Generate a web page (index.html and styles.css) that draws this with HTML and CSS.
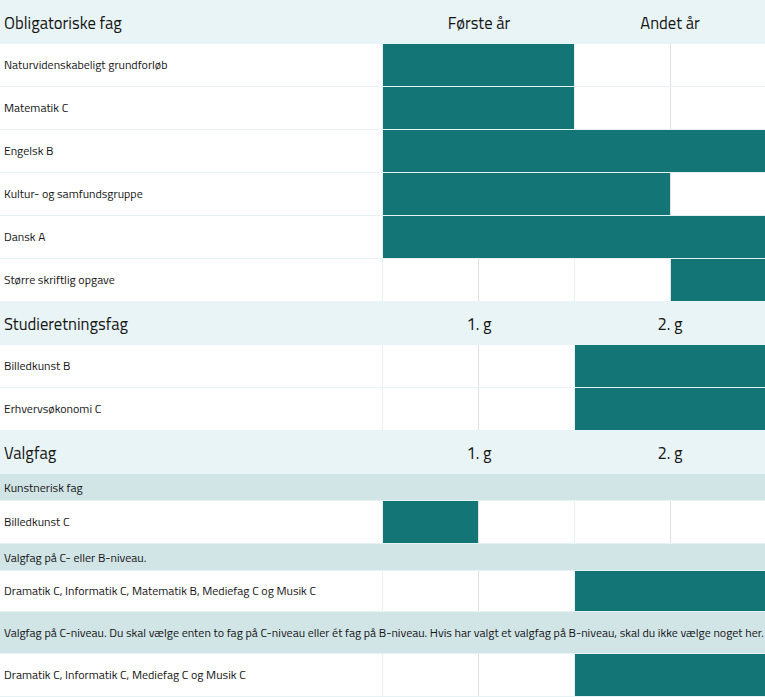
FILE: index.html
```html
<!DOCTYPE html>
<html lang="da">
<head>
<meta charset="utf-8">
<title>Fagoversigt</title>
<link rel="stylesheet" href="styles.css">
</head>
<body>
<div class="schedule">
  <section class="group">
    <div class="head">
      <div class="head-label">Obligatoriske fag</div>
      <div class="head-year">Første år</div>
      <div class="head-year">Andet år</div>
    </div>
    <div class="row">
      <div class="label">Naturvidenskabeligt grundforløb</div>
      <div class="cell sep-light on"></div><div class="cell sep-gray on cont"></div><div class="cell sep-light"></div><div class="cell sep-gray"></div>
    </div>
    <div class="row">
      <div class="label">Matematik C</div>
      <div class="cell sep-light on"></div><div class="cell sep-gray on cont"></div><div class="cell sep-light"></div><div class="cell sep-gray"></div>
    </div>
    <div class="row">
      <div class="label">Engelsk B</div>
      <div class="cell sep-light on"></div><div class="cell sep-gray on cont"></div><div class="cell sep-light on cont"></div><div class="cell sep-gray on cont"></div>
    </div>
    <div class="row">
      <div class="label">Kultur- og samfundsgruppe</div>
      <div class="cell sep-light on"></div><div class="cell sep-gray on cont"></div><div class="cell sep-light on cont"></div><div class="cell sep-gray"></div>
    </div>
    <div class="row">
      <div class="label">Dansk A</div>
      <div class="cell sep-light on"></div><div class="cell sep-gray on cont"></div><div class="cell sep-light on cont"></div><div class="cell sep-gray on cont"></div>
    </div>
    <div class="row">
      <div class="label">Større skriftlig opgave</div>
      <div class="cell sep-light"></div><div class="cell sep-gray"></div><div class="cell sep-light"></div><div class="cell sep-gray on"></div>
    </div>
  </section>

  <section class="group">
    <div class="head">
      <div class="head-label">Studieretningsfag</div>
      <div class="head-year">1. g</div>
      <div class="head-year">2. g</div>
    </div>
    <div class="row">
      <div class="label">Billedkunst B</div>
      <div class="cell sep-light"></div><div class="cell sep-gray"></div><div class="cell sep-light on"></div><div class="cell sep-gray on cont"></div>
    </div>
    <div class="row">
      <div class="label">Erhvervsøkonomi C</div>
      <div class="cell sep-light"></div><div class="cell sep-gray"></div><div class="cell sep-light on"></div><div class="cell sep-gray on cont"></div>
    </div>
  </section>

  <section class="group">
    <div class="head">
      <div class="head-label">Valgfag</div>
      <div class="head-year">1. g</div>
      <div class="head-year">2. g</div>
    </div>
    <div class="row sub">Kunstnerisk fag</div>
    <div class="row">
      <div class="label">Billedkunst C</div>
      <div class="cell sep-light on"></div><div class="cell sep-gray"></div><div class="cell sep-light"></div><div class="cell sep-gray"></div>
    </div>
    <div class="row sub">Valgfag på C- eller B-niveau.</div>
    <div class="row short">
      <div class="label">Dramatik C, Informatik C, Matematik B, Mediefag C og Musik C</div>
      <div class="cell sep-light"></div><div class="cell sep-gray"></div><div class="cell sep-light on"></div><div class="cell sep-gray on cont"></div>
    </div>
    <div class="row sub tall">Valgfag på C-niveau. Du skal vælge enten to fag på C-niveau eller ét fag på B-niveau. Hvis har valgt et valgfag på B-niveau, skal du ikke vælge noget her.</div>
    <div class="row last">
      <div class="label">Dramatik C, Informatik C, Mediefag C og Musik C</div>
      <div class="cell sep-light"></div><div class="cell sep-gray"></div><div class="cell sep-light on"></div><div class="cell sep-gray on cont"></div>
    </div>
  </section>
</div>
</body>
</html>
```
FILE: styles.css
```css
html, body {
  margin: 0;
  padding: 0;
  background: #ffffff;
}

body {
  font-family: "Titillium Web", "Lato", sans-serif;
  color: #161616;
}

.schedule {
  width: 765px;
}

.head {
  display: grid;
  grid-template-columns: 383px 192px 1fr;
  align-items: center;
  height: 44px;
  background: #e8f4f5;
  font-size: 16.6px;
}

.head-label {
  padding-left: 4px;
}

.head-year {
  text-align: center;
}

.row {
  display: grid;
  grid-template-columns: 382px 96px 96px 96px 1fr;
  height: 42px;
  font-size: 12px;
}

.row + .row {
  border-top: 1px solid #e6f2f3;
}

.row.short {
  height: 40px;
}

.row.last {
  border-bottom: 1px solid #e6f2f3;
}

.label {
  display: flex;
  align-items: center;
  padding-left: 4px;
  padding-bottom: 2px;
  white-space: nowrap;
}

.cell {
  box-sizing: border-box;
  border-left: 1px solid #e6f1f2;
}

.cell.sep-gray {
  border-left-color: #e0e0e0;
}

.cell.sep-light {
  border-left-color: #e6f1f2;
}

.cell.on {
  background: #147577;
}

.cell.on.cont {
  border-left-color: #147577;
}

.sub {
  display: flex;
  align-items: center;
  height: 26px;
  padding-left: 4px;
  background: #d1e4e6;
  white-space: nowrap;
}

.sub.tall {
  height: 41px;
}
```
